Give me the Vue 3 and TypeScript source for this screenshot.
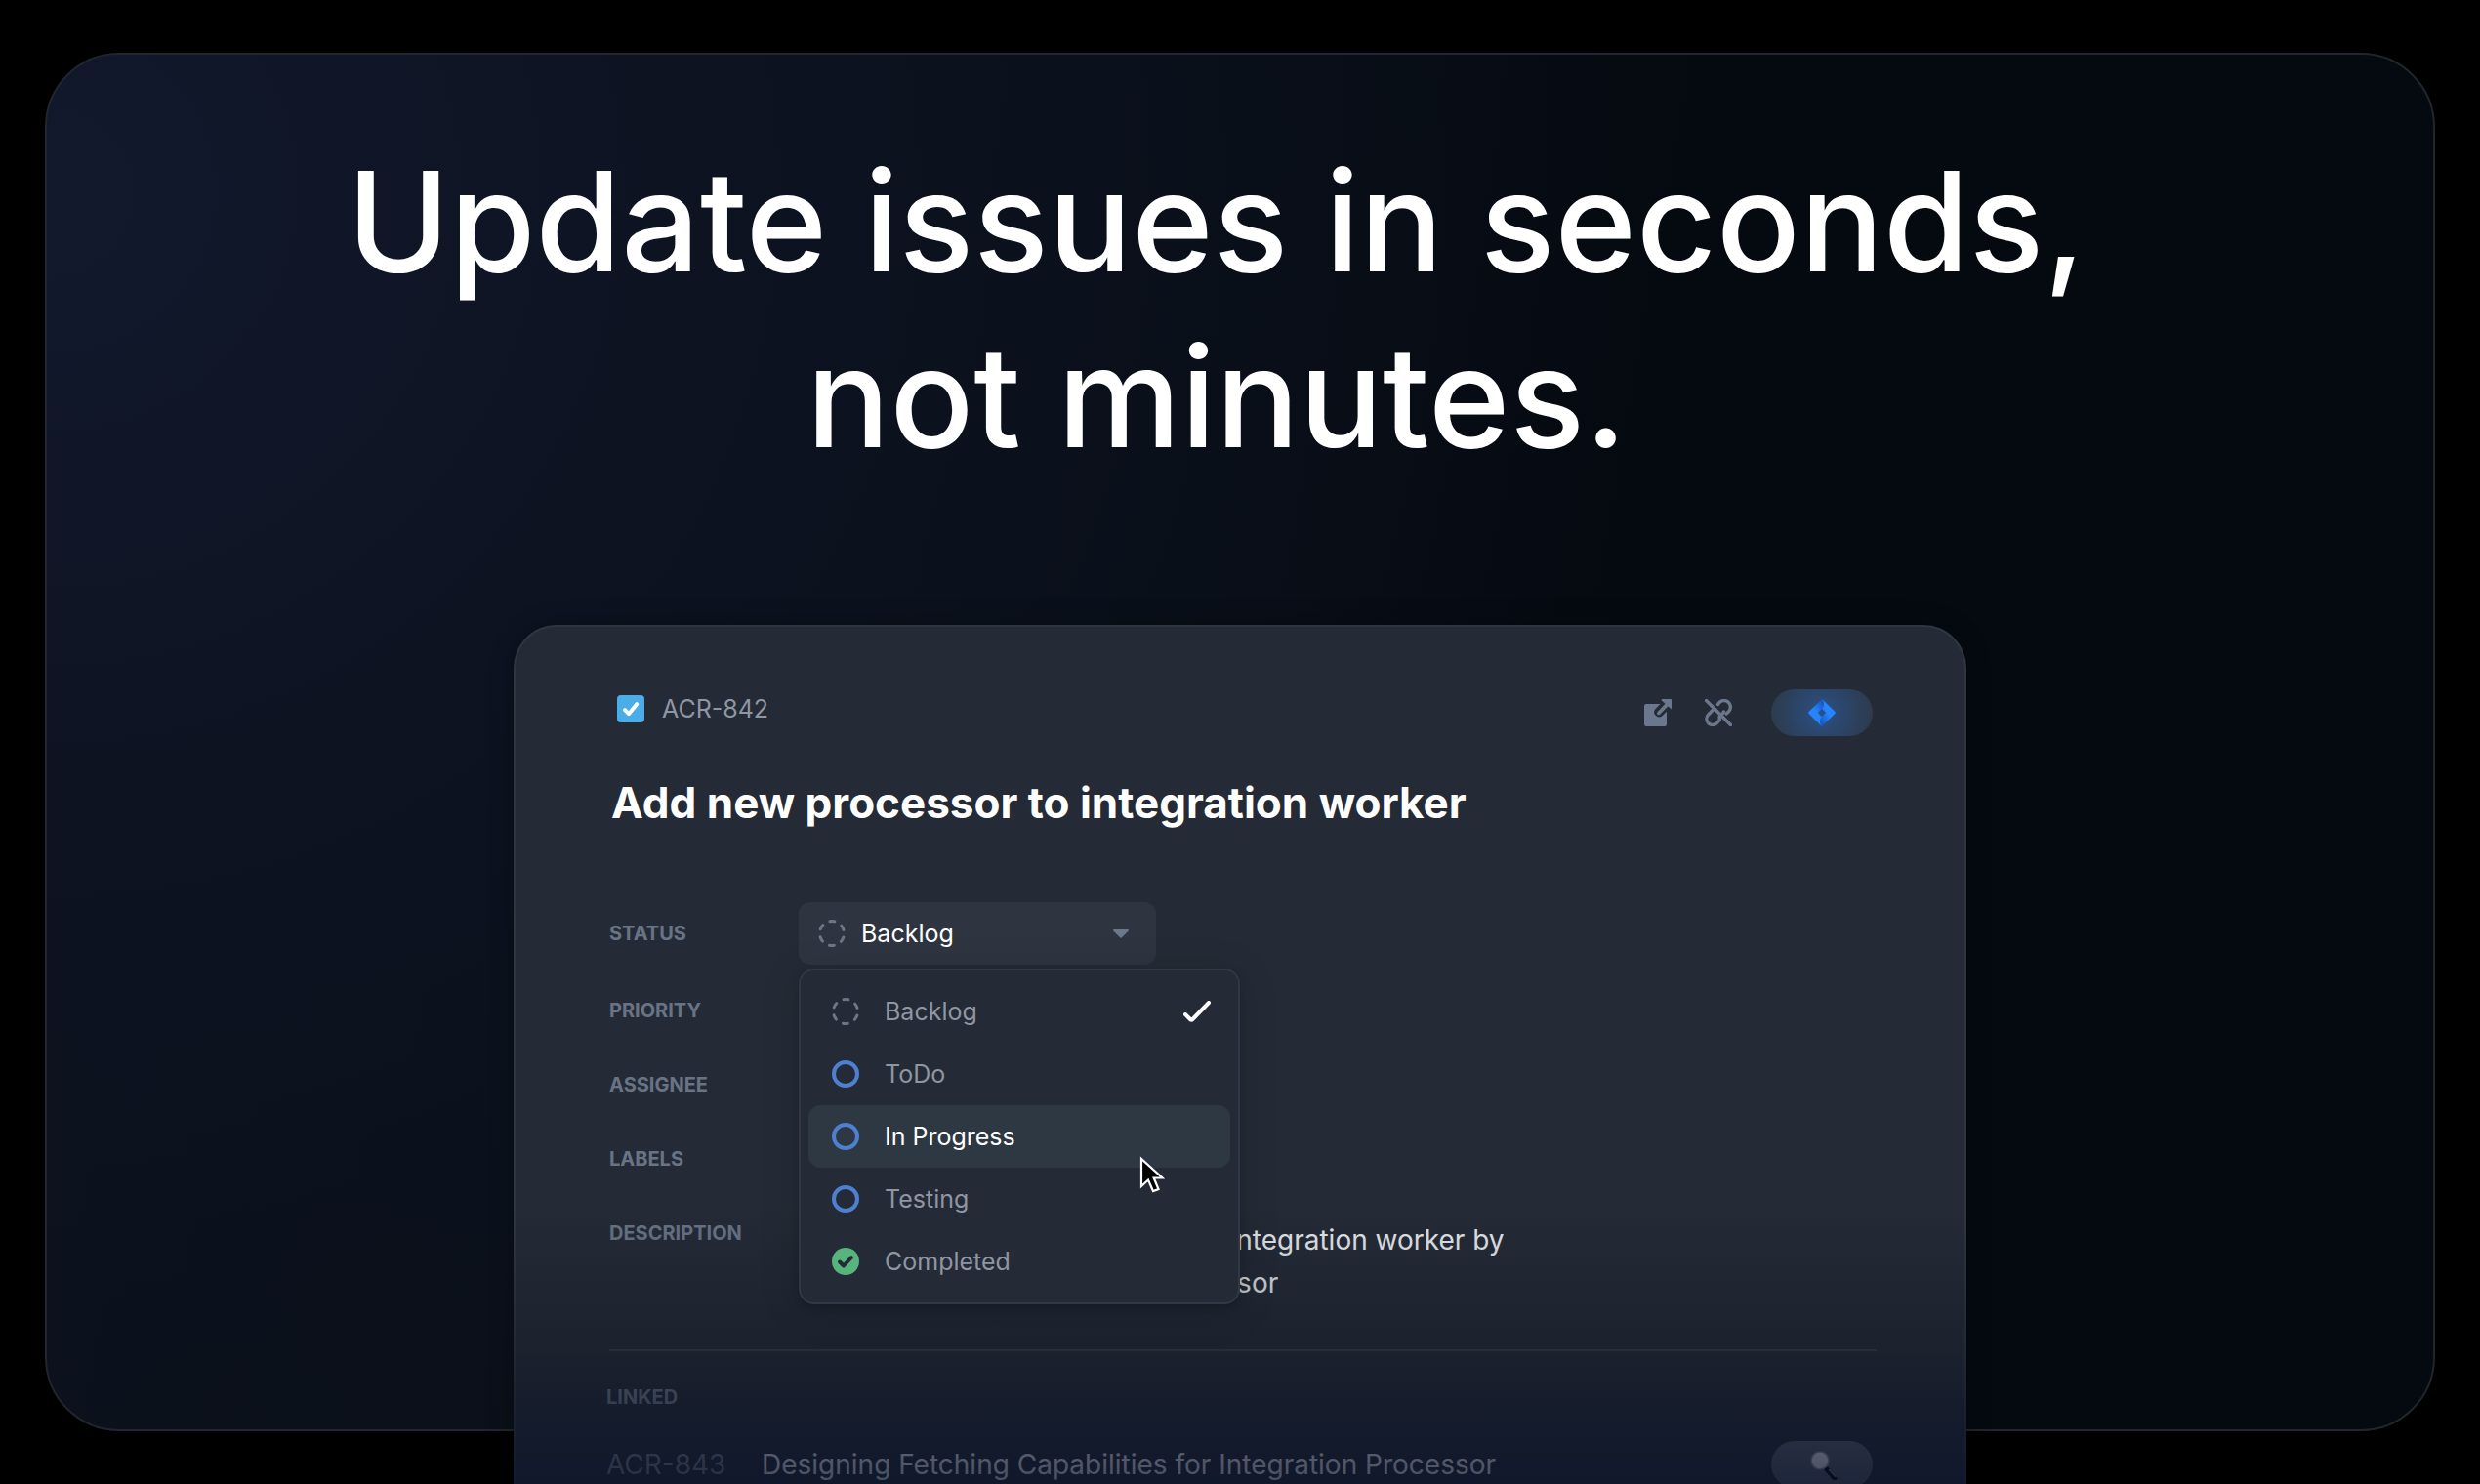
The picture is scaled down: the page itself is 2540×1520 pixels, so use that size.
<script setup lang="ts">
import { ref } from 'vue'

type IconKind = 'dashed' | 'ring' | 'done'

interface StatusOption {
  name: string
  icon: IconKind
}

const options: StatusOption[] = [
  { name: 'Backlog', icon: 'dashed' },
  { name: 'ToDo', icon: 'ring' },
  { name: 'In Progress', icon: 'ring' },
  { name: 'Testing', icon: 'ring' },
  { name: 'Completed', icon: 'done' },
]

const status = ref('Backlog')
const highlighted = ref('In Progress')
const isTask = ref(true)
const emptyFields = ['Priority', 'Assignee', 'Labels']
</script>

<template>
  <main class="page">
    <section class="panel">
      <h1 class="headline">Update issues in seconds,<br />not minutes.</h1>

      <article class="card">
        <header class="card-head">
          <label class="issue-key">
            <span class="task-box">
              <input v-model="isTask" type="checkbox" />
              <svg viewBox="0 0 28 28" aria-hidden="true">
                <path v-if="isTask" d="M8 15.2 12 19.2 20.2 9.2" fill="none" stroke="#fff" stroke-width="4" stroke-linecap="round" stroke-linejoin="round" />
              </svg>
            </span>
            <span>ACR-842</span>
          </label>
          <div class="actions">
            <button type="button" class="icon-button" aria-label="Open issue">
              <svg viewBox="0 0 28 28" aria-hidden="true">
                <path fill="#6b778c" d="M2 5h14.500l-5 5a5 5 0 0 0 6.900 7.200L23 12.700V26a2 2 0 0 1-2 2H2a2 2 0 0 1-2-2V7a2 2 0 0 1 2-2Z" />
                <path fill="#6b778c" d="M18 0h9.200a.8.8 0 0 1 .8.8V10.500L24.300 7.400 16 15.700a1.700 1.700 0 0 1-2.500-2.400L21.500 4.800 17.500 1.300Z" />
              </svg>
            </button>
            <button type="button" class="icon-button" aria-label="Unlink issue">
              <svg viewBox="0 0 28 28" aria-hidden="true" fill="none" stroke="#6b778c" stroke-width="3.400" stroke-linecap="round">
                <path d="M1.500 1.500 26.500 26.500" />
                <path d="M13.500 5.500 15 3.500a6.600 6.600 0 0 1 9.400 0 6.600 6.600 0 0 1 0 9.400L22 15" />
                <path d="M8 11.500 3.600 16a6.300 6.300 0 0 0 0 8.700 6.300 6.300 0 0 0 8.800 0L15.200 21.500V18" />
                <path d="M10 10.500 12.500 12.500M17.800 15.500 19.500 13" />
              </svg>
            </button>
            <button type="button" class="pill pill-jira" aria-label="Jira">
              <svg viewBox="0 0 28 28" aria-hidden="true">
                <defs>
                  <linearGradient id="jira-left" x1="0.9" y1="0.1" x2="0.5" y2="0.5">
                    <stop offset="0" stop-color="#1559c4" />
                    <stop offset="1" stop-color="#2684ff" />
                  </linearGradient>
                  <linearGradient id="jira-right" x1="0.1" y1="0.9" x2="0.5" y2="0.5">
                    <stop offset="0" stop-color="#1559c4" />
                    <stop offset="1" stop-color="#2684ff" />
                  </linearGradient>
                </defs>
                <path fill="url(#jira-left)" d="M14.200 0c2.600 3.600 2.300 7.200-.2 9.900L10 14l4 4-.2 10L.6 14.900a1.300 1.300 0 0 1 0-1.800Z" />
                <path fill="url(#jira-right)" d="M13.800 28c-2.600-3.600-2.300-7.200.2-9.900L18 14l-4-4c2.500-2.700 2.800-6.400.2-10l13.200 13.100a1.300 1.300 0 0 1 0 1.800Z" />
              </svg>
            </button>
          </div>
        </header>

        <h2 class="title">Add new processor to integration worker</h2>

        <div class="field field-status">
          <label class="caption" for="status">Status</label>
          <div class="control">
            <svg class="select-icon" viewBox="0 0 28 28" aria-hidden="true">
              <circle class="dashes" cx="14" cy="14" r="12.500" />
            </svg>
            <select id="status" v-model="status">
              <option v-for="option in options" :key="option.name">{{ option.name }}</option>
            </select>
            <svg class="caret" viewBox="0 0 18 10" aria-hidden="true"><path d="M1 0h16a1 1 0 0 1 .7 1.700L9.700 9.600a1 1 0 0 1-1.400 0L.3 1.700A1 1 0 0 1 1 0Z" fill="#6b778c" /></svg>

            <div class="menu" role="listbox" aria-label="Status">
              <button
                v-for="option in options"
                :key="option.name"
                type="button"
                role="option"
                class="option"
                :class="{ active: option.name === highlighted }"
                :aria-selected="option.name === status"
                @mouseenter="highlighted = option.name"
                @click="status = option.name"
              >
                <svg class="option-icon" viewBox="0 0 28 28" aria-hidden="true">
                  <circle v-if="option.icon === 'dashed'" class="dashes" cx="14" cy="14" r="12.500" />
                  <circle v-else-if="option.icon === 'ring'" cx="14" cy="14" r="12" fill="none" stroke="#4e7fd0" stroke-width="4" />
                  <template v-else>
                    <circle cx="14" cy="14" r="14" fill="#57b47c" />
                    <path d="M8 14.500 12 18.500 20 10" fill="none" stroke="#252b36" stroke-width="4" stroke-linecap="round" stroke-linejoin="round" />
                  </template>
                </svg>
                <span class="option-name">{{ option.name }}</span>
                <svg v-if="option.name === status" class="option-check" viewBox="0 0 28 22" aria-hidden="true">
                  <path d="M2 14 7.500 19.500Q8.500 20 9.500 19L26 2" fill="none" stroke="#fff" stroke-width="4" stroke-linecap="round" />
                </svg>
              </button>
              <svg class="cursor" viewBox="0 0 26 40" aria-hidden="true">
                <path d="M2 3V31L9 24.500 14 36 19.500 34 14.700 22.500H23.500Z" fill="#000" stroke="#fff" stroke-width="2.200" />
              </svg>
            </div>
          </div>
        </div>

        <div v-for="name in emptyFields" :key="name" class="field">
          <span class="caption">{{ name }}</span>
        </div>

        <div class="field">
          <span class="caption">Description</span>
          <p class="description">to the integration worker by<br />processor</p>
        </div>

        <hr class="divider" />

        <section class="linked">
          <h3 class="caption">Linked</h3>
          <div class="linked-row">
            <span class="linked-key">ACR-843</span>
            <a class="linked-title" href="#ACR-843">Designing Fetching Capabilities for Integration Processor</a>
            <button type="button" class="pill pill-search" aria-label="Inspect">
              <svg viewBox="0 0 32 32" aria-hidden="true">
                <path d="M21 21 29 30" stroke="#05070d" stroke-width="5" stroke-linecap="round" />
                <path d="M23.500 21.500 30 28.500" stroke="#7d8392" stroke-width="1.500" stroke-linecap="round" />
                <circle cx="14" cy="12" r="9" fill="#dfe2e6" stroke="#8f959f" stroke-width="1.500" />
              </svg>
            </button>
          </div>
        </section>
      </article>
    </section>
  </main>
</template>

<style>
body {
  background: #000;
}
</style>

<style scoped>
.page {
  box-sizing: border-box;
  height: 100vh;
  padding: 54px 46px;
  overflow: hidden;
  background: #000;
  color: #fff;
  font-family: Inter, "Liberation Sans", sans-serif;
}

.panel {
  display: flex;
  flex-direction: column;
  align-items: center;
  padding-top: 80px;
  border: 2px solid #20262b;
  border-radius: 76px;
  background:
    radial-gradient(ellipse 66% 110% at 0% 10%, #12192d 0%, #0c121f 48%, rgba(5, 10, 17, 0) 100%),
    linear-gradient(100deg, #0d121c 0%, #050a11 64%);
}

.headline {
  margin: 0;
  padding-right: 48px;
  font-size: 142px;
  font-weight: 500;
  line-height: 180px;
  text-align: center;
}

.card {
  position: relative;
  box-sizing: border-box;
  width: min(1488px, 100%);
  margin: 144px 0 -60px;
  padding: 64px 90px 0 96px;
  border: 2px solid #2f3640;
  border-bottom: 0;
  border-radius: 44px 44px 0 0;
  background: #252b36;
  box-shadow: 0 0 24px rgba(0, 0, 0, 0.3);
}

.card::after {
  content: "";
  position: absolute;
  z-index: 1;
  inset: auto -2px 0;
  height: 290px;
  background: linear-gradient(rgba(8, 16, 30, 0), rgba(8, 16, 30, 0.34) 52%, rgba(8, 15, 34, 0.52) 70%, rgba(8, 16, 40, 0.72));
  pointer-events: none;
}

button {
  padding: 0;
  border: 0;
  background: none;
  color: inherit;
  font: inherit;
}

svg {
  display: block;
}

.card-head {
  display: flex;
  justify-content: space-between;
  align-items: flex-start;
  padding: 0 4px 0 8px;
}

.issue-key {
  display: flex;
  align-items: center;
  gap: 18px;
  color: #8f96a3;
  font-size: 25px;
  line-height: 40px;
}

.task-box {
  display: grid;
  width: 28px;
  height: 28px;
}

.task-box > * {
  grid-area: 1 / 1;
}

.task-box input {
  appearance: none;
  width: 28px;
  height: 28px;
  margin: 0;
  border-radius: 4px;
  background: #4bade8;
}

.task-box svg {
  pointer-events: none;
}

.actions {
  display: flex;
  align-items: center;
}

.icon-button {
  width: 28px;
  height: 28px;
  margin-right: 34px;
}

.icon-button + .icon-button {
  margin-right: 40px;
}

.pill {
  display: flex;
  justify-content: center;
  align-items: center;
  width: 104px;
  height: 48px;
  border-radius: 24px;
}

.pill-jira {
  background: radial-gradient(circle at center, #2b5084 0%, #2c4466 50%, #2e3945 100%);
}

.pill-jira svg {
  width: 28px;
  height: 28px;
}

.title {
  margin: 40px 0 74px;
  padding-left: 2px;
  font-size: 44px;
  font-weight: 700;
  line-height: 56px;
}

.field {
  display: flex;
  margin-bottom: 46px;
}

.field-status {
  align-items: center;
  margin-bottom: 32px;
}

.caption {
  flex: none;
  width: 194px;
  margin: 0;
  color: #687485;
  font-size: 20px;
  font-weight: 700;
  line-height: 30px;
  text-transform: uppercase;
}

.control {
  position: relative;
  width: 366px;
}

select {
  display: block;
  appearance: none;
  box-sizing: border-box;
  width: 100%;
  height: 64px;
  padding: 0 64px;
  border: 0;
  border-radius: 12px;
  background: #2f3540;
  color: #fff;
  font: 400 25px Inter, "Liberation Sans", sans-serif;
}

.select-icon,
.caret {
  position: absolute;
  pointer-events: none;
}

.select-icon {
  top: 18px;
  left: 20px;
  width: 28px;
}

.caret {
  top: 28px;
  right: 28px;
  width: 16px;
}

.dashes {
  fill: none;
  stroke: #6b7787;
  stroke-width: 3;
  stroke-linecap: round;
  stroke-dasharray: 5 8.090;
  stroke-dashoffset: 9.050;
}

.menu {
  position: absolute;
  z-index: 2;
  top: 68px;
  left: 0;
  box-sizing: border-box;
  width: 452px;
  padding: 10px 8px;
  border: 2px solid #2f3843;
  border-radius: 16px;
  background: #252b36;
  box-shadow: 0 6px 40px rgba(0, 0, 0, 0.16), 0 4px 6px rgba(0, 0, 0, 0.14);
}

.option {
  display: flex;
  align-items: center;
  box-sizing: border-box;
  width: 100%;
  height: 64px;
  padding: 0 20px 0 24px;
  border-radius: 12px;
  color: #8f96a3;
  font-size: 25px;
  line-height: 32px;
  text-align: left;
}

.option.active {
  background: #2e3842;
  color: #fff;
}

.option-icon {
  width: 28px;
  margin-right: 26px;
}

.option-name {
  flex: 1;
}

.option-check {
  width: 28px;
}

.cursor {
  position: absolute;
  top: 190px;
  left: 347px;
  width: 26px;
}

.description {
  margin: 0 0 0 358px;
  color: #e8ebee;
  font-size: 28px;
  line-height: 44px;
}

.divider {
  height: 2px;
  margin: 0;
  border: 0;
  background: #363d48;
}

.linked {
  margin: 32px 4px 0 -3px;
}

.linked-row {
  display: flex;
  align-items: center;
  margin-top: 30px;
  font-size: 28px;
  line-height: 44px;
}

.linked-key {
  flex: none;
  width: 159px;
  color: #727a87;
}

.linked-title {
  flex: 1;
  color: #e0e3e8;
  text-decoration: none;
}

.pill-search {
  background: #555c6b;
}

.pill-search svg {
  width: 32px;
  fill: none;
}
</style>
